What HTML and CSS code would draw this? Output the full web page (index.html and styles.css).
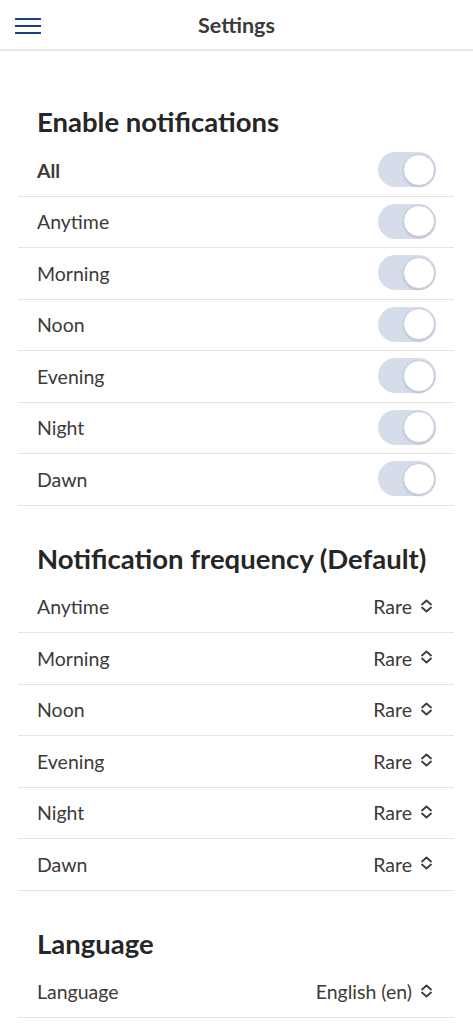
FILE: index.html
```html
<!DOCTYPE html>
<html lang="en">
<head>
<meta charset="utf-8">
<title>Settings</title>
<link rel="stylesheet" href="styles.css">
</head>
<body>
<header class="topbar">
  <button class="menu-btn" aria-label="Menu">
    <svg width="26" height="16" viewBox="0 0 26 16"><path d="M0 1h26M0 8h26M0 15h26" stroke="#1b3b8c" stroke-width="2"/></svg>
  </button>
  <h1 class="title">Settings</h1>
</header>
<main class="content">
  <section class="section">
    <h2 class="section-title">Enable notifications</h2>
    <ul class="list">
      <li class="row"><span class="label bold">All</span><span class="toggle"><span class="knob"></span></span></li>
      <li class="row"><span class="label">Anytime</span><span class="toggle"><span class="knob"></span></span></li>
      <li class="row"><span class="label">Morning</span><span class="toggle"><span class="knob"></span></span></li>
      <li class="row"><span class="label">Noon</span><span class="toggle"><span class="knob"></span></span></li>
      <li class="row"><span class="label">Evening</span><span class="toggle"><span class="knob"></span></span></li>
      <li class="row"><span class="label">Night</span><span class="toggle"><span class="knob"></span></span></li>
      <li class="row"><span class="label">Dawn</span><span class="toggle"><span class="knob"></span></span></li>
    </ul>
  </section>
  <section class="section">
    <h2 class="section-title">Notification frequency (Default)</h2>
    <ul class="list">
      <li class="row"><span class="label">Anytime</span><span class="select">Rare<svg class="chev" width="13" height="14" viewBox="0 0 13 14"><path d="M2 5.5L6.5 1.5l4.5 4M2 8.5L6.5 12.5l4.5-4" fill="none" stroke="#3d3a38" stroke-width="1.8" stroke-linecap="round" stroke-linejoin="round"/></svg></span></li>
      <li class="row"><span class="label">Morning</span><span class="select">Rare<svg class="chev" width="13" height="14" viewBox="0 0 13 14"><path d="M2 5.5L6.5 1.5l4.5 4M2 8.5L6.5 12.5l4.5-4" fill="none" stroke="#3d3a38" stroke-width="1.8" stroke-linecap="round" stroke-linejoin="round"/></svg></span></li>
      <li class="row"><span class="label">Noon</span><span class="select">Rare<svg class="chev" width="13" height="14" viewBox="0 0 13 14"><path d="M2 5.5L6.5 1.5l4.5 4M2 8.5L6.5 12.5l4.5-4" fill="none" stroke="#3d3a38" stroke-width="1.8" stroke-linecap="round" stroke-linejoin="round"/></svg></span></li>
      <li class="row"><span class="label">Evening</span><span class="select">Rare<svg class="chev" width="13" height="14" viewBox="0 0 13 14"><path d="M2 5.5L6.5 1.5l4.5 4M2 8.5L6.5 12.5l4.5-4" fill="none" stroke="#3d3a38" stroke-width="1.8" stroke-linecap="round" stroke-linejoin="round"/></svg></span></li>
      <li class="row"><span class="label">Night</span><span class="select">Rare<svg class="chev" width="13" height="14" viewBox="0 0 13 14"><path d="M2 5.5L6.5 1.5l4.5 4M2 8.5L6.5 12.5l4.5-4" fill="none" stroke="#3d3a38" stroke-width="1.8" stroke-linecap="round" stroke-linejoin="round"/></svg></span></li>
      <li class="row"><span class="label">Dawn</span><span class="select">Rare<svg class="chev" width="13" height="14" viewBox="0 0 13 14"><path d="M2 5.5L6.5 1.5l4.5 4M2 8.5L6.5 12.5l4.5-4" fill="none" stroke="#3d3a38" stroke-width="1.8" stroke-linecap="round" stroke-linejoin="round"/></svg></span></li>
    </ul>
  </section>
  <section class="section">
    <h2 class="section-title">Language</h2>
    <ul class="list">
      <li class="row"><span class="label">Language</span><span class="select">English (en)<svg class="chev" width="13" height="14" viewBox="0 0 13 14"><path d="M2 5.5L6.5 1.5l4.5 4M2 8.5L6.5 12.5l4.5-4" fill="none" stroke="#3d3a38" stroke-width="1.8" stroke-linecap="round" stroke-linejoin="round"/></svg></span></li>
    </ul>
  </section>
</main>
</body>
</html>
```

FILE: styles.css
```css
* { box-sizing: border-box; }
html, body { margin: 0; padding: 0; background: #fff; }
body {
  font-family: "Lato", "Noto Sans", "Liberation Sans", sans-serif;
  color: #3d3a38;
}
.topbar {
  position: relative;
  height: 51px;
  border-bottom: 2px solid #ebe7e7;
  display: flex;
  align-items: center;
  justify-content: center;
}
.menu-btn {
  position: absolute;
  left: 15px;
  top: 18px;
  padding: 0;
  border: 0;
  background: none;
  line-height: 0;
}
.title {
  margin: 2px 0 0;
  font-size: 21.5px;
  font-weight: 700;
  color: #3a3a3a;
  line-height: 1;
}
.content { padding: 18px 19px 0 18px; }
.section-title {
  margin: 37px 0 7px;
  padding-left: 19px;
  font-size: 27.5px;
  line-height: 32px;
  font-weight: 700;
  color: #262626;
}
.list { list-style: none; margin: 0; padding: 0; }
.row {
  display: flex;
  align-items: center;
  justify-content: space-between;
  height: 51.5px;
  padding: 0 18px 0 19px;
  border-bottom: 1.5px solid #e6e2e2;
  font-size: 19.5px;
}
.label.bold { font-weight: 700; }
.toggle {
  position: relative;
  width: 58px;
  height: 35px;
  border-radius: 18px;
  background: #d5dcea;
  margin-top: -1px;
}
.knob {
  position: absolute;
  right: 1px;
  top: 1.5px;
  width: 32px;
  height: 32px;
  border-radius: 50%;
  background: #fff;
  border: 1.5px solid #c5cde0;
  box-shadow: 0 1px 2px rgba(120,130,160,0.35);
}
.select {
  display: flex;
  align-items: center;
  gap: 8px;
  padding-right: 3px;
}
.chev { display: block; margin-top: -2px; }
```
